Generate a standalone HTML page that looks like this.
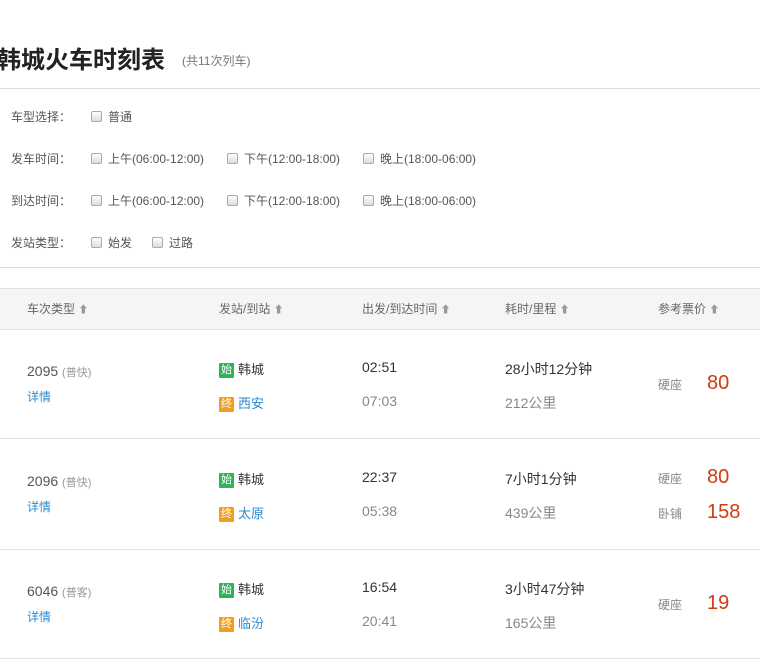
<!DOCTYPE html><html><head><meta charset="utf-8"><style>
*{margin:0;padding:0;box-sizing:border-box}
body{width:760px;height:660px;background:#fff;font-family:"Liberation Sans","Noto Sans CJK SC",sans-serif;position:relative;overflow:hidden;color:#333}
.a{position:absolute;white-space:nowrap}
.cb{display:inline-block;width:11px;height:11px;border:1px solid #aaa;border-radius:2px;background:linear-gradient(#fff,#ddd);vertical-align:-1px;margin-right:6px}
.f{font-size:12px;color:#555}
.h{font-size:12px;color:#666}
.ar{color:#999;font-size:10px}
.tag{display:inline-block;width:15px;height:15px;color:#fff;font-size:11px;line-height:15px;text-align:center;margin-right:4px;border-radius:1px;vertical-align:1px}
.g{background:#2eb35a}.o{background:#f0a020}
.p{color:#d03c10;font-size:20px}
</style></head><body>
<div class="a" style="left:-3px;top:40px;font-size:24px;font-weight:bold;color:#222">韩城火车时刻表</div>
<div class="a" style="left:182px;top:52px;font-size:12px;color:#777">(共11次列车)</div>
<div class="a" style="left:0;top:88px;width:760px;height:1px;background:#ddd"></div>
<div class="a f" style="left:11px;top:108px">车型选择：</div>
<div class="a f" style="left:91px;top:108px"><span class="cb"></span>普通</div>
<div class="a f" style="left:11px;top:150px">发车时间：</div>
<div class="a f" style="left:91px;top:150px"><span class="cb"></span>上午(06:00-12:00)</div>
<div class="a f" style="left:227px;top:150px"><span class="cb"></span>下午(12:00-18:00)</div>
<div class="a f" style="left:363px;top:150px"><span class="cb"></span>晚上(18:00-06:00)</div>
<div class="a f" style="left:11px;top:192px">到达时间：</div>
<div class="a f" style="left:91px;top:192px"><span class="cb"></span>上午(06:00-12:00)</div>
<div class="a f" style="left:227px;top:192px"><span class="cb"></span>下午(12:00-18:00)</div>
<div class="a f" style="left:363px;top:192px"><span class="cb"></span>晚上(18:00-06:00)</div>
<div class="a f" style="left:11px;top:234px">发站类型：</div>
<div class="a f" style="left:91px;top:234px"><span class="cb"></span>始发</div>
<div class="a f" style="left:152px;top:234px"><span class="cb"></span>过路</div>
<div class="a" style="left:0;top:267px;width:760px;height:1px;background:#ddd"></div>
<div class="a" style="left:0;top:288px;width:760px;height:42px;background:#f5f5f5;border-top:1px solid #e2e2e2;border-bottom:1px solid #e2e2e2"></div>
<div class="a h" style="left:27px;top:300px">车次类型 <span class="ar">⬆</span></div>
<div class="a h" style="left:219px;top:300px">发站/到站 <span class="ar">⬆</span></div>
<div class="a h" style="left:362px;top:300px">出发/到达时间 <span class="ar">⬆</span></div>
<div class="a h" style="left:505px;top:300px">耗时/里程 <span class="ar">⬆</span></div>
<div class="a h" style="left:658px;top:300px">参考票价 <span class="ar">⬆</span></div>

<div class="a" style="left:27px;top:363px;font-size:14px;color:#555">2095 <span style="font-size:11px;color:#999">(普快)</span></div>
<div class="a" style="left:27px;top:388px;font-size:12px;color:#2a8ad0">详情</div>
<div class="a" style="left:219px;top:359px;font-size:13px"><span class="tag g">始</span>韩城</div>
<div class="a" style="left:219px;top:393px;font-size:13px;color:#2a8ad0"><span class="tag o">终</span>西安</div>
<div class="a" style="left:362px;top:359px;font-size:14px;color:#333">02:51</div>
<div class="a" style="left:362px;top:393px;font-size:14px;color:#888">07:03</div>
<div class="a" style="left:505px;top:359px;font-size:14px;color:#333">28小时12分钟</div>
<div class="a" style="left:505px;top:393px;font-size:14px;color:#888">212公里</div>
<div class="a" style="left:658px;top:376px;font-size:12px;color:#888">硬座</div>
<div class="a p" style="left:707px;top:372px">80</div>
<div class="a" style="left:0;top:438px;width:760px;height:1px;background:#e2e2e2"></div>

<div class="a" style="left:27px;top:473px;font-size:14px;color:#555">2096 <span style="font-size:11px;color:#999">(普快)</span></div>
<div class="a" style="left:27px;top:498px;font-size:12px;color:#2a8ad0">详情</div>
<div class="a" style="left:219px;top:469px;font-size:13px"><span class="tag g">始</span>韩城</div>
<div class="a" style="left:219px;top:503px;font-size:13px;color:#2a8ad0"><span class="tag o">终</span>太原</div>
<div class="a" style="left:362px;top:469px;font-size:14px;color:#333">22:37</div>
<div class="a" style="left:362px;top:503px;font-size:14px;color:#888">05:38</div>
<div class="a" style="left:505px;top:469px;font-size:14px;color:#333">7小时1分钟</div>
<div class="a" style="left:505px;top:503px;font-size:14px;color:#888">439公里</div>
<div class="a" style="left:658px;top:470px;font-size:12px;color:#888">硬座</div>
<div class="a p" style="left:707px;top:466px">80</div>
<div class="a" style="left:658px;top:505px;font-size:12px;color:#888">卧铺</div>
<div class="a p" style="left:707px;top:501px">158</div>
<div class="a" style="left:0;top:549px;width:760px;height:1px;background:#e2e2e2"></div>

<div class="a" style="left:27px;top:583px;font-size:14px;color:#555">6046 <span style="font-size:11px;color:#999">(普客)</span></div>
<div class="a" style="left:27px;top:608px;font-size:12px;color:#2a8ad0">详情</div>
<div class="a" style="left:219px;top:579px;font-size:13px"><span class="tag g">始</span>韩城</div>
<div class="a" style="left:219px;top:613px;font-size:13px;color:#2a8ad0"><span class="tag o">终</span>临汾</div>
<div class="a" style="left:362px;top:579px;font-size:14px;color:#333">16:54</div>
<div class="a" style="left:362px;top:613px;font-size:14px;color:#888">20:41</div>
<div class="a" style="left:505px;top:579px;font-size:14px;color:#333">3小时47分钟</div>
<div class="a" style="left:505px;top:613px;font-size:14px;color:#888">165公里</div>
<div class="a" style="left:658px;top:596px;font-size:12px;color:#888">硬座</div>
<div class="a p" style="left:707px;top:592px">19</div>
<div class="a" style="left:0;top:658px;width:760px;height:1px;background:#e2e2e2"></div>
</body></html>
